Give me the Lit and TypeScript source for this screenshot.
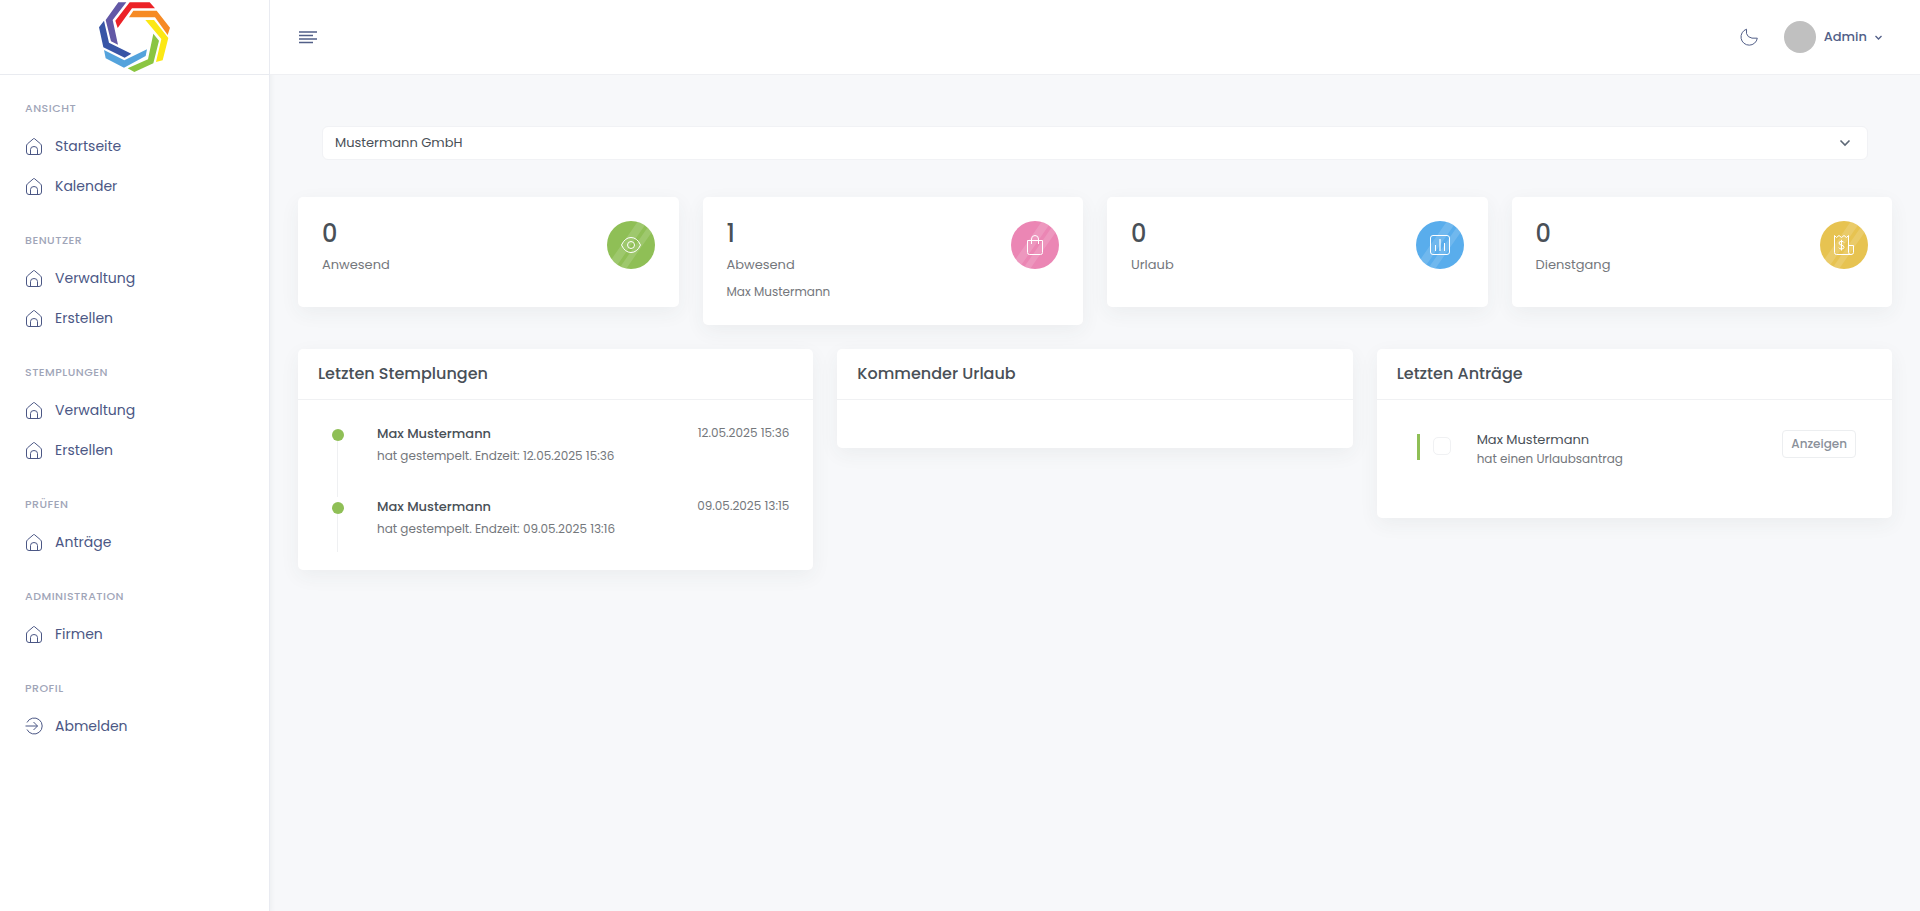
import { LitElement, html, svg, css, TemplateResult } from "lit";
import { customElement, property } from "lit/decorators.js";

const house = svg`<path d="M2.5 6.8 8.6 1.6Q9 1.3 9.4 1.6L15.5 6.8Q16.5 7.8 16.5 9V15Q16.5 17.5 14 17.5H4Q1.5 17.5 1.5 15V9Q1.5 7.8 2.5 6.8Z"/><path d="M5.5 17.5V12.5Q5.5 9.5 9 9.5T12.5 12.5V17.5"/>`;
const exit = svg`<path d="M2 5.5A8 8 0 1 1 2 12.5"/><path d="M.5 9H12.5M8.5 5 12.5 9 8.5 13"/>`;

const statIcons: Record<string, TemplateResult> = {
  eye: svg`<path d="M14.5 24Q18 16.5 24 16.5T33.5 24Q30 31.5 24 31.5T14.5 24Z"/><circle cx="24" cy="24" r="3.5"/>`,
  bag: svg`<path d="M16.5 19.5H31.5V31.5Q31.5 33.5 29.5 33.5H18.5Q16.5 33.5 16.5 31.5Z"/><path d="M20.5 23V18Q20.5 14.5 24 14.5T27.5 18V23"/>`,
  chart: svg`<rect x="14.5" y="14.5" width="19" height="19" rx="2.5"/><path d="M19.5 24V30M28.5 22V30"/><path stroke-width="2" stroke-opacity="0.6" d="M24 18V30"/>`,
  receipt: svg`<path d="M31.5 33.5H16.5Q14.5 33.5 14.5 31.5V14.5L16.5 16.5 19 14.5 21.5 16.5 24 14.5 26.5 16.5 28.5 14.5V31.5Q28.5 33.5 31 33.5 33.5 33.5 33.5 31.5V24.5H28.5"/><path d="M24 21.5Q23.5 20.3 21.5 20.3 19 20.3 19 22T21.5 24.2Q24 24.5 24 26.3T21.5 28Q19.3 28 18.8 26.7M21.5 18.8V29.5"/>`,
};

interface NavGroup { title: string; items: string[] }

const groups: NavGroup[] = [
  { title: "Ansicht", items: ["Startseite", "Kalender"] },
  { title: "Benutzer", items: ["Verwaltung", "Erstellen"] },
  { title: "Stemplungen", items: ["Verwaltung", "Erstellen"] },
  { title: "Prüfen", items: ["Anträge"] },
  { title: "Administration", items: ["Firmen"] },
  { title: "Profil", items: ["Abmelden"] },
];

@customElement("app-sidebar")
class AppSidebar extends LitElement {
  static styles = css`
    :host { display: block; background: #fff; border-right: 1px solid #e9ebf1; box-shadow: 0 2px 6px rgba(56, 65, 74, 0.08); }
    .brand { display: flex; justify-content: center; align-items: center; height: 74px; border-bottom: 1px solid #e9ebf0; }
    .logo { display: block; width: 71px; height: 70px; }
    h2 { margin: 0; padding: 23px 25px 8px; font-size: 11px; line-height: 20px; font-weight: 500; letter-spacing: 0.5px; text-transform: uppercase; color: #a0a5b8; }
    ul { list-style: none; margin: 0; padding: 0 0 1px; }
    a { display: flex; align-items: center; gap: 12px; height: 40px; padding: 0 25px; font-size: 14px; color: #4b5785; text-decoration: none; }
    .icon { width: 18px; height: 18px; fill: none; stroke: currentColor; stroke-width: 1; }
  `;
  render() {
    return html`
      <div class="brand">
        <svg class="logo" viewBox="57 6 213 210" role="img" aria-label="Logo">
          <polygon fill="#6258a6" points="115,7 139,7 98,60 114,134 93,124 77,60"/>
          <polygon fill="#ec2227" points="149,7 209,7 225,25 156,25 113,84 106,62"/>
          <polygon fill="#f68a24" points="160,32 230,32 270,83 263,105 225,52 147,52"/>
          <polygon fill="#fce814" points="196,60 222,60 265,114 248,181 228,186 244,117"/>
          <polygon fill="#8ac541" points="220,101 237,122 220,190 163,216 143,205 204,178"/>
          <polygon fill="#54a3dc" points="72,150 133,181 201,148 197,168 132,203 77,175"/>
          <polygon fill="#3855a6" points="72,62 87,128 154,161 134,173 70,142 57,82"/>
        </svg>
      </div>
      <nav>
        ${groups.map((g) => html`
          <h2>${g.title}</h2>
          <ul>${g.items.map((i) => html`
            <li><a href="#"><svg class="icon" viewBox="0 0 18 18" aria-hidden="true">${i === "Abmelden" ? exit : house}</svg>${i}</a></li>`)}
          </ul>`)}
      </nav>`;
  }
}

@customElement("app-topbar")
class AppTopbar extends LitElement {
  static styles = css`
    :host { display: flex; align-items: center; justify-content: space-between; height: 74px; padding: 0 38px 0 28px; background: #fff; border-bottom: 1px solid #eff0f3; color: #525f88; }
    button { display: flex; align-items: center; padding: 0; border: 0; background: none; font: inherit; color: inherit; cursor: pointer; }
    svg { display: block; fill: none; stroke: currentColor; }
    .menu { stroke-width: 1.7; }
    .right { display: flex; align-items: center; gap: 26px; }
    .user { gap: 8px; font-size: 13px; font-weight: 500; }
    .avatar { width: 32px; height: 32px; border-radius: 50%; background: #c0c0c0; }
  `;
  render() {
    return html`
      <button aria-label="Menü">
        <svg class="menu" width="20" height="14" viewBox="0 0 20 14"><path d="M1 2H19M1 5.5H15M1 9H19M1 12.5H15"/></svg>
      </button>
      <div class="right">
        <button aria-label="Dunkelmodus">
          <svg width="18" height="18" viewBox="0 0 18 18"><path d="M6.5 1.2Q4.8 11.5 17.3 10.2A8.2 8.2 0 1 1 6.5 1.2Z"/></svg>
        </button>
        <button class="user">
          <span class="avatar"></span>Admin
          <svg width="7" height="5" viewBox="0 0 7 5" stroke-width="1.3"><path d="M.5 1 3.5 4 6.5 1"/></svg>
        </button>
      </div>`;
  }
}

@customElement("stat-card")
class StatCard extends LitElement {
  @property() value = "";
  @property() label = "";
  @property() detail = "";
  @property() icon = "eye";
  @property() tone = "green";
  static styles = css`
    :host { display: flex; justify-content: space-between; align-items: flex-start; min-height: 62px; padding: 24px; background: #fff; border-radius: 5px; box-shadow: 0 6px 20px rgba(56, 65, 74, 0.06); }
    .value { margin: 0; font-size: 24px; line-height: 26px; font-weight: 500; color: #495057; }
    .label { margin: 0; padding-top: 8px; font-size: 13px; line-height: 20px; color: #74777c; }
    .detail { margin: 0; padding-top: 8px; font-size: 12px; line-height: 18px; color: #74777c; }
    .badge { width: 48px; height: 48px; border-radius: 50%; flex: none; }
    .green { background: #8fbf56; }
    .pink { background: #eb86b4; }
    .blue { background: #59adec; }
    .yellow { background: #e7c351; }
    .shine { stroke: #fff; stroke-opacity: 0.14; fill: none; }
    .glyph { stroke: #fff; fill: none; }
  `;
  render() {
    return html`
      <div>
        <p class="value">${this.value}</p>
        <p class="label">${this.label}</p>
        ${this.detail ? html`<p class="detail">${this.detail}</p>` : ""}
      </div>
      <svg class="badge ${this.tone}" viewBox="0 0 48 48" aria-hidden="true">
        <path class="shine" stroke-width="8" d="M36 0 4 46"/>
        <path class="shine" stroke-width="6" d="M46 4 14 50"/>
        <g class="glyph">${statIcons[this.icon]}</g>
      </svg>`;
  }
}

@customElement("panel-card")
class PanelCard extends LitElement {
  @property() heading = "";
  static styles = css`
    :host { display: block; background: #fff; border-radius: 5px; box-shadow: 0 6px 20px rgba(56, 65, 74, 0.06); }
    h3 { margin: 0; padding: 13px 20px; font-size: 16px; line-height: 24px; font-weight: 500; color: #495057; border-bottom: 1px solid #f0f1f3; }
    .body { padding: 24px; }
  `;
  render() {
    return html`<h3>${this.heading}</h3><div class="body"><slot></slot></div>`;
  }
}

interface Stamp { name: string; start: string; end: string }

const stamps: Stamp[] = [
  { name: "Max Mustermann", start: "12.05.2025 15:36", end: "12.05.2025 15:36" },
  { name: "Max Mustermann", start: "09.05.2025 13:15", end: "09.05.2025 13:16" },
];

@customElement("app-root")
class AppRoot extends LitElement {
  static styles = css`
    :host { display: grid; grid-template-columns: 270px minmax(0, 1fr); min-height: 100vh; background: #f7f8fa; font-family: Poppins, Inter, sans-serif; font-size: 13px; line-height: 20px; color: #495057; }
    main { padding: 51px 28px 24px; }
    .company { display: grid; padding: 0 24px; margin-bottom: 37px; align-items: center; }
    .company select { grid-area: 1 / 1; appearance: none; height: 34px; padding: 0 12px; border: 1px solid #f1f2f5; border-radius: 6px; background: #fff; color: #495057; font: inherit; font-size: 13px; }
    .company svg { grid-area: 1 / 1; justify-self: end; margin-right: 17px; fill: none; stroke: #5d6876; stroke-width: 1.6; pointer-events: none; }
    .row { display: grid; gap: 24px; align-items: start; margin-bottom: 24px; }
    .stats { grid-template-columns: repeat(4, minmax(0, 1fr)); }
    .panels { grid-template-columns: repeat(3, minmax(0, 1fr)); }
    ul { list-style: none; margin: 0; padding: 0; }
    .stamp { display: grid; grid-template-columns: 12px 1fr auto; column-gap: 33px; height: 73px; padding-left: 10px; }
    .rail { display: flex; flex-direction: column; align-items: center; padding-top: 5px; }
    .dot { width: 12px; height: 12px; border-radius: 50%; background: #8fbf56; }
    .line { flex: 1; width: 1px; margin-right: 1px; background: #eff0f2; }
    .stamp:last-child { height: 55px; }
    .stamps { margin-bottom: -6px; }
    p { margin: 0; }
    .name { line-height: 20px; font-size: 13px; font-weight: 500; }
    .text { font-size: 12px; line-height: 24px; color: #74777c; }
    .date { font-size: 12px; line-height: 18px; color: #74777c; }
    .request { display: flex; align-items: flex-start; padding: 6px 12px 26px 16px; }
    .bar { width: 3px; height: 26px; margin-top: 4px; background: #8fbf56; }
    .request input { appearance: none; width: 18px; height: 18px; margin: 7px 26px 0 13px; border: 1px solid #f0f1f3; border-radius: 5px; background: #fff; }
    .request label { flex: 1; }
    .request .name { font-weight: 400; }
    .request .text { line-height: 18px; }
    .show { height: 28px; padding: 0 8px; border: 1px solid #eceef0; border-radius: 4px; background: #fff; color: #8a909a; font: inherit; font-size: 12px; font-weight: 500; }
  `;
  render() {
    return html`
      <app-sidebar></app-sidebar>
      <div>
        <app-topbar></app-topbar>
        <main>
          <div class="company">
            <select aria-label="Firma"><option>Mustermann GmbH</option></select>
            <svg width="12" height="8" viewBox="0 0 12 8"><path d="M1.5 1.5 6 6 10.5 1.5"/></svg>
          </div>
          <section class="row stats">
            <stat-card value="0" label="Anwesend" icon="eye" tone="green"></stat-card>
            <stat-card value="1" label="Abwesend" detail="Max Mustermann" icon="bag" tone="pink"></stat-card>
            <stat-card value="0" label="Urlaub" icon="chart" tone="blue"></stat-card>
            <stat-card value="0" label="Dienstgang" icon="receipt" tone="yellow"></stat-card>
          </section>
          <section class="row panels">
            <panel-card heading="Letzten Stemplungen">
              <ul class="stamps">
                ${stamps.map((s) => html`
                  <li class="stamp">
                    <div class="rail"><span class="dot"></span><span class="line"></span></div>
                    <div>
                      <p class="name">${s.name}</p>
                      <p class="text">hat gestempelt. Endzeit: ${s.end}</p>
                    </div>
                    <time class="date">${s.start}</time>
                  </li>`)}
              </ul>
            </panel-card>
            <panel-card heading="Kommender Urlaub"></panel-card>
            <panel-card heading="Letzten Anträge">
              <div class="request">
                <span class="bar"></span>
                <input type="checkbox" id="request">
                <label for="request">
                  <p class="name">Max Mustermann</p>
                  <p class="text">hat einen Urlaubsantrag</p>
                </label>
                <button class="show">Anzeigen</button>
              </div>
            </panel-card>
          </section>
        </main>
      </div>`;
  }
}
